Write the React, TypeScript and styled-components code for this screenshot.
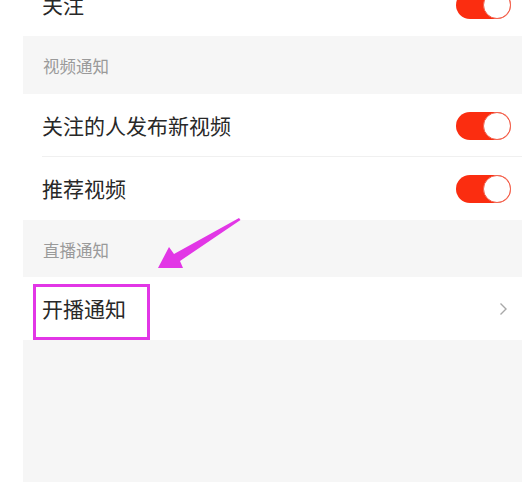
import React from "react";
import styled, { createGlobalStyle } from "styled-components";

const GlobalStyle = createGlobalStyle`
  html, body {
    margin: 0;
    padding: 0;
    background: #ffffff;
  }
  body {
    font-family: "Noto Sans CJK SC", "Noto Sans", sans-serif;
  }
`;

type Item =
  | { kind: "header"; label: string; tall?: boolean }
  | { kind: "toggle"; label: string; on: boolean; divider?: boolean }
  | { kind: "link"; label: string };

const items: Item[] = [
  { kind: "toggle", label: "关注", on: true },
  { kind: "header", label: "视频通知", tall: true },
  { kind: "toggle", label: "关注的人发布新视频", on: true, divider: true },
  { kind: "toggle", label: "推荐视频", on: true },
  { kind: "header", label: "直播通知" },
  { kind: "link", label: "开播通知" },
];

const Switch = ({ on }: { on: boolean }) => (
  <Track $on={on}>
    <Knob $on={on} />
  </Track>
);

const Chevron = () => (
  <svg width="9" height="14" viewBox="0 0 9 14" fill="none">
    <path d="M1.5 1.5 L7 7 L1.5 12.5" stroke="#a8a8a8" strokeWidth="1.4" />
  </svg>
);

const App = () => {
  return (
    <>
      <GlobalStyle />
      <Page>
        <Panel>
          {items.map((item, i) =>
            item.kind === "header" ? (
              <SectionHeader key={i} $tall={!!item.tall}>
                {item.label}
              </SectionHeader>
            ) : (
              <Row key={i} $divider={item.kind === "toggle" && !!item.divider}>
                <Label>{item.label}</Label>
                {item.kind === "toggle" ? (
                  <Switch on={item.on} />
                ) : (
                  <ChevronWrap>
                    <Chevron />
                  </ChevronWrap>
                )}
              </Row>
            )
          )}
        </Panel>
        <HighlightBox />
        <Arrow width="100" height="60" viewBox="0 0 100 60">
          <polygon points="83,0 84.5,2 24,43 27,50 2,50 13,29 18,36" fill="#e236e6" />
        </Arrow>
      </Page>
    </>
  );
};

const Page = styled.div`
  position: relative;
  width: 532px;
  height: 482px;
  overflow: hidden;
  padding-left: 23px;
  padding-right: 10px;
  box-sizing: border-box;
`;

const Panel = styled.div`
  margin-top: -27px;
  min-height: 509px;
  background: #f6f6f6;
  display: flex;
  flex-direction: column;
`;

const SectionHeader = styled.div<{ $tall: boolean }>`
  height: ${(p) => (p.$tall ? 58 : 57)}px;
  display: flex;
  align-items: center;
  padding-left: 20px;
  padding-top: 2px;
  box-sizing: border-box;
  font-size: 16.5px;
  color: #9a9a9a;
  background: #f6f6f6;
`;

const Row = styled.div<{ $divider: boolean }>`
  position: relative;
  height: 63px;
  box-sizing: border-box;
  display: flex;
  align-items: center;
  justify-content: space-between;
  padding: 0 11px 0 19px;
  background: #ffffff;
  &::after {
    content: "";
    display: ${(p) => (p.$divider ? "block" : "none")};
    position: absolute;
    left: 19px;
    right: 0;
    bottom: 0;
    height: 1px;
    background: #f0f0f0;
  }
`;

const Label = styled.span`
  font-size: 21px;
  color: #282828;
  line-height: 1;
`;

const Track = styled.div<{ $on: boolean }>`
  width: 55px;
  height: 28px;
  border-radius: 14px;
  background: ${(p) => (p.$on ? "#fb2d10" : "#e5e5e5")};
  display: flex;
  align-items: center;
  justify-content: ${(p) => (p.$on ? "flex-end" : "flex-start")};
  box-sizing: border-box;
`;

const Knob = styled.div<{ $on: boolean }>`
  width: 28px;
  height: 28px;
  border-radius: 50%;
  background: #ffffff;
  box-sizing: border-box;
  border: 1.5px solid ${(p) => (p.$on ? "#f0624e" : "#dddddd")};
`;

const ChevronWrap = styled.span`
  display: flex;
  align-items: center;
  padding-right: 3px;
`;

const HighlightBox = styled.div`
  position: absolute;
  left: 33px;
  top: 284px;
  width: 117px;
  height: 56px;
  box-sizing: border-box;
  border: 3px solid #e236e6;
`;

const Arrow = styled.svg`
  position: absolute;
  left: 156px;
  top: 218px;
`;

export default App;
